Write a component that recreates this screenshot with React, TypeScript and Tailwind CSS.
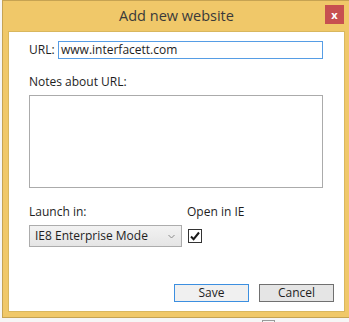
import React from 'react';

const font = { fontFamily: '"Open Sans", "Noto Sans", sans-serif' };

const ChevronDown = () => (
  <svg width="7" height="5" viewBox="0 0 7 5" className="shrink-0">
    <path d="M0.5 1 L3.5 4 L6.5 1" fill="none" stroke="#8a8a8a" strokeWidth="1" />
  </svg>
);

const CheckMark = () => (
  <svg width="12" height="12" viewBox="0 0 12 12">
    <path d="M2 6.5 L4.6 9.2 L10 2.5" fill="none" stroke="#1a1a1a" strokeWidth="2" />
  </svg>
);

export default function App() {
  return (
    <div
      className="w-[349px] h-[322px] overflow-hidden bg-[#f6f6f6] text-[#1e1e1e] text-[12px] leading-[16px] flex flex-col"
      style={font}
    >
      <div className="ml-[2px] w-[349px] h-[318px] shrink-0 border border-[#c6a352] bg-[#f0c869] flex flex-col">
        {/* title bar */}
        <div className="h-[30px] grid grid-cols-[1fr_auto_1fr] items-start">
          <div />
          <div className="pt-[5px] text-[14.5px] leading-[20px] text-[#3a3a3a]">Add new website</div>
          <div className="flex justify-end pt-[4px] pr-[6px]">
            <div className="w-[19px] h-[19px] bg-[#c75050] flex items-center justify-center text-white text-[11px] font-bold leading-none pb-[1px]">
              x
            </div>
          </div>
        </div>

        {/* client area */}
        <div className="mx-[5px] h-[281px] bg-white border border-[#d9b75e] flex flex-col pl-[20px] pr-[10px]">
          <div className="mt-[9px] flex items-center">
            <span className="w-[29px]">URL:</span>
            <div className="w-[265px] h-[18px] border border-[#569de5] flex items-center pl-[2px] text-[12px]">
              www.interfacett.com
            </div>
          </div>

          <div className="mt-[15px]">Notes about URL:</div>
          <div className="mt-[5px] w-[294px] h-[93px] border border-[#ababab]" />

          <div className="mt-[16px] flex">
            <span className="w-[158px]">Launch in:</span>
            <span>Open in IE</span>
          </div>
          <div className="mt-[5px] flex items-start">
            <div className="w-[153px] h-[22px] border border-[#acacac] bg-gradient-to-b from-[#f2f2f2] to-[#e5e5e5] flex items-center justify-between pl-[5px] pr-[6px]">
              <span>IE8 Enterprise Mode</span>
              <ChevronDown />
            </div>
            <div className="ml-[6px] mt-[4px] w-[14px] h-[14px] border border-[#333333] bg-white flex items-center justify-center">
              <CheckMark />
            </div>
          </div>

          <div className="mt-[37px] flex justify-end gap-[10px]">
            <div className="w-[75px] h-[18px] border border-[#3c8fe0] bg-[#f0f0f0] flex items-center justify-center">
              Save
            </div>
            <div className="w-[75px] h-[18px] border border-[#707070] bg-[#e5e5e5] flex items-center justify-center">
              Cancel
            </div>
          </div>
        </div>
      </div>

      {/* strip of whatever is behind the dialog */}
      <div className="flex h-[4px] items-end">
        <div className="ml-[262px] w-[13px] h-[2px] border-t border-x border-[#9a9a9a]" />
      </div>
    </div>
  );
}
